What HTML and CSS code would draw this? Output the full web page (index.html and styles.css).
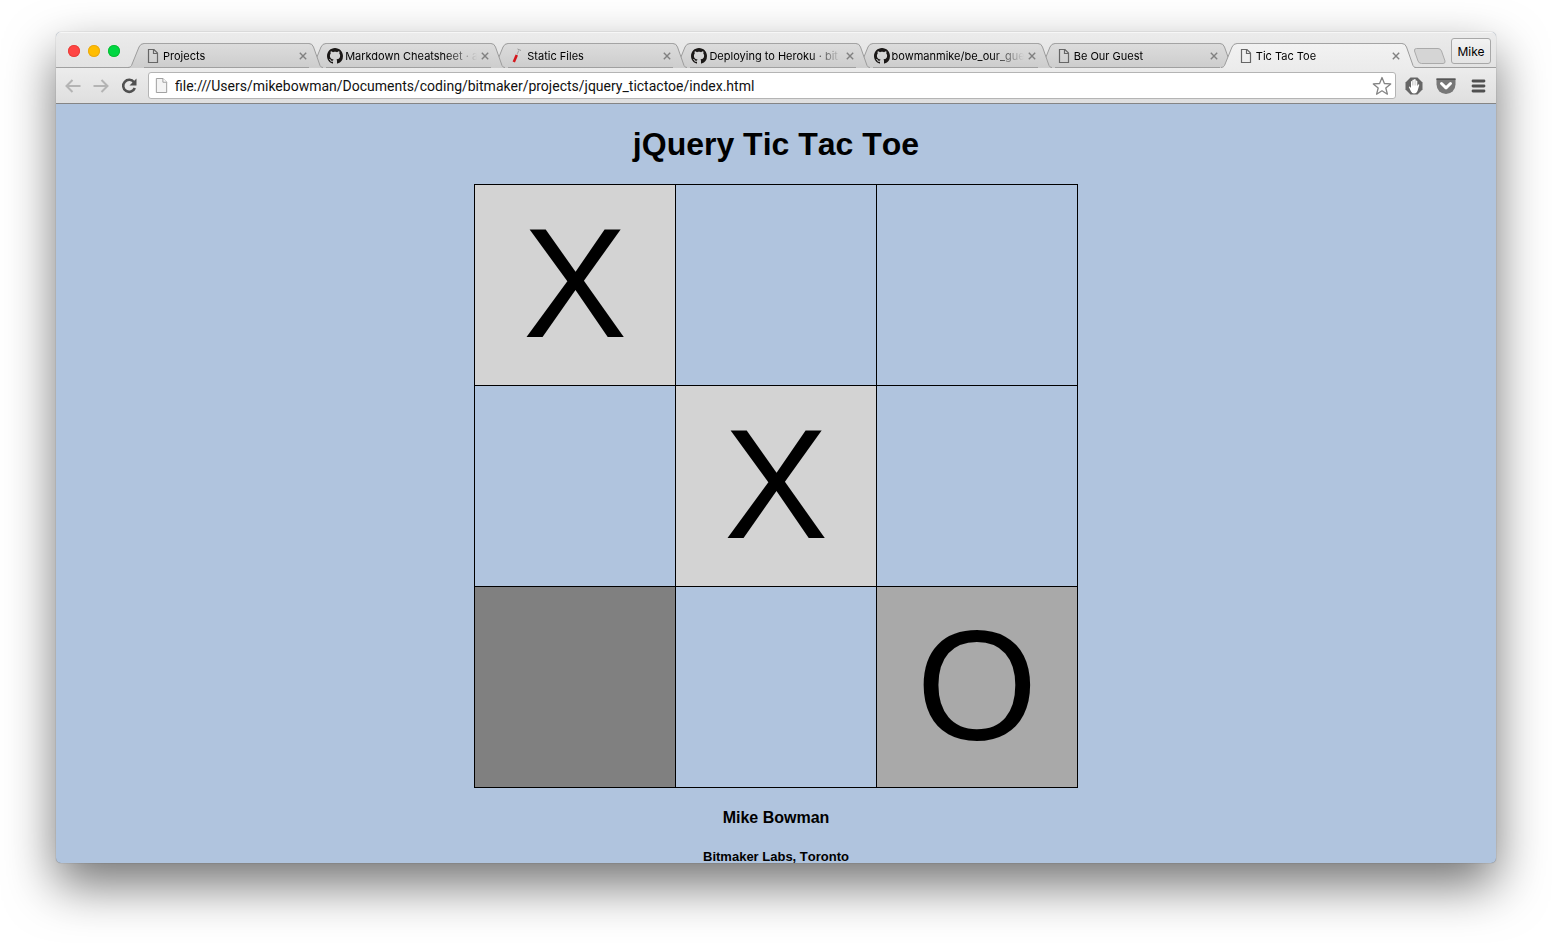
FILE: index.html
```html
<!DOCTYPE html>
<html lang="en">
<head>
<meta charset="utf-8">
<title>Tic Tac Toe</title>
<link rel="stylesheet" href="styles.css">
</head>
<body>
<svg class="defs" aria-hidden="true">
  <defs>
    <linearGradient id="tab-fill" x1="0" y1="0" x2="0" y2="1"><stop offset="0" stop-color="#dcdcdc"/><stop offset="1" stop-color="#cdcdcd"/></linearGradient>
    <linearGradient id="tab-on" x1="0" y1="0" x2="0" y2="1"><stop offset="0" stop-color="#f2f2f2"/><stop offset="1" stop-color="#ececec"/></linearGradient>
    <symbol id="edge-l" viewBox="0 0 16 25"><path d="M0 25C2 24.500 3 23.500 3.500 22.500L11 4Q12.500 .5 16 .5V25Z"/><path class="line" d="M0 24.500C2 24.300 3 23.500 3.500 22.500L11 4Q12.500 .5 16 .5"/></symbol>
    <symbol id="edge-r" viewBox="0 0 14 25"><path d="M14 25C12 24.500 11.500 23.500 11 22.500L4.500 4Q3.300 .5 0 .5V25Z"/><path class="line" d="M14 24.500C12 24.300 11.500 23.500 11 22.500L4.500 4Q3.300 .5 0 .5"/></symbol>
    <symbol id="page" viewBox="0 0 16 16"><path d="M3.500 1.500H9L12.500 5V14.500H3.500ZM8.500 1.500V5.500H12.500" fill="none" stroke="#666" stroke-width="1.200"/></symbol>
    <symbol id="github" viewBox="0 0 16 16"><path fill="#1b1817" d="M8 0C3.580 0 0 3.580 0 8c0 3.540 2.290 6.530 5.470 7.590.4.070.55-.17.55-.38 0-.19-.01-.82-.01-1.490-2.010.37-2.530-.49-2.690-.94-.09-.23-.48-.94-.82-1.130-.28-.15-.68-.52-.01-.53.63-.01 1.080.58 1.230.82.72 1.210 1.870.87 2.330.66.070-.52.28-.87.51-1.070-1.780-.2-3.640-.89-3.640-3.950 0-.87.31-1.590.82-2.150-.08-.2-.36-1.020.08-2.120 0 0 .67-.21 2.200.82.64-.18 1.320-.27 2-.27s1.360.09 2 .27c1.530-1.040 2.200-.82 2.200-.82.44 1.100.16 1.920.08 2.120.51.56.82 1.270.82 2.150 0 3.070-1.870 3.750-3.650 3.950.29.25.54.73.54 1.480 0 1.070-.01 1.930-.01 2.200 0 .21.15.46.55.38A8.010 8.010 0 0 0 16 8c0-4.420-3.580-8-8-8z"/></symbol>
    <symbol id="tube" viewBox="0 0 16 16"><path d="M5 14L10.500 1.500" stroke="#ddd" stroke-width="2.600"/><path d="M4.800 14L7.800 7" stroke="#d4161c" stroke-width="2.600"/><path d="M8 6.500L9.800 2.500" stroke="#aaa" stroke-width="1.200"/><path d="M8.500 1L12 2.500" stroke="#999"/></symbol>
    <symbol id="cross" viewBox="0 0 12 12"><path d="M2.800 2.800L9.200 9.200M9.200 2.800L2.800 9.200" stroke="#808080" stroke-width="1.400"/></symbol>
  </defs>
</svg>
<div class="window">
  <header class="titlebar">
    <div class="lights">
      <button class="light close" aria-label="Close window"></button>
      <button class="light minimise" aria-label="Minimise window"></button>
      <button class="light expand" aria-label="Zoom window"></button>
    </div>
    <nav class="tabs">
      <div class="tab"><svg class="edge left"><use href="#edge-l"/></svg><div class="tab-body"><svg class="favicon"><use href="#page"/></svg><span class="tab-title">Projects</span><button class="tab-close" aria-label="Close tab"><svg><use href="#cross"/></svg></button></div><svg class="edge"><use href="#edge-r"/></svg></div>
      <div class="tab"><svg class="edge left"><use href="#edge-l"/></svg><div class="tab-body"><svg class="favicon"><use href="#github"/></svg><span class="tab-title">Markdown Cheatsheet · a</span><button class="tab-close" aria-label="Close tab"><svg><use href="#cross"/></svg></button></div><svg class="edge"><use href="#edge-r"/></svg></div>
      <div class="tab"><svg class="edge left"><use href="#edge-l"/></svg><div class="tab-body"><svg class="favicon"><use href="#tube"/></svg><span class="tab-title">Static Files</span><button class="tab-close" aria-label="Close tab"><svg><use href="#cross"/></svg></button></div><svg class="edge"><use href="#edge-r"/></svg></div>
      <div class="tab"><svg class="edge left"><use href="#edge-l"/></svg><div class="tab-body"><svg class="favicon"><use href="#github"/></svg><span class="tab-title">Deploying to Heroku · bit</span><button class="tab-close" aria-label="Close tab"><svg><use href="#cross"/></svg></button></div><svg class="edge"><use href="#edge-r"/></svg></div>
      <div class="tab"><svg class="edge left"><use href="#edge-l"/></svg><div class="tab-body"><svg class="favicon"><use href="#github"/></svg><span class="tab-title">bowmanmike/be_our_gue</span><button class="tab-close" aria-label="Close tab"><svg><use href="#cross"/></svg></button></div><svg class="edge"><use href="#edge-r"/></svg></div>
      <div class="tab"><svg class="edge left"><use href="#edge-l"/></svg><div class="tab-body"><svg class="favicon"><use href="#page"/></svg><span class="tab-title">Be Our Guest</span><button class="tab-close" aria-label="Close tab"><svg><use href="#cross"/></svg></button></div><svg class="edge"><use href="#edge-r"/></svg></div>
      <div class="tab active"><svg class="edge left"><use href="#edge-l"/></svg><div class="tab-body"><svg class="favicon"><use href="#page"/></svg><span class="tab-title">Tic Tac Toe</span><button class="tab-close" aria-label="Close tab"><svg><use href="#cross"/></svg></button></div><svg class="edge"><use href="#edge-r"/></svg></div>
    </nav>
    <button class="new-tab" aria-label="New tab"><svg viewBox="0 0 34 18"><path d="M3.500 1.500H25Q27.500 1.500 28.500 4L32 14Q32.500 16.500 30 16.500H8.500Q6 16.500 5 14L1.500 4Q1 1.500 3.500 1.500Z" fill="#d5d5d5" stroke="#aaa"/></svg></button>
    <button class="profile">Mike</button>
  </header>
  <div class="toolbar">
    <button class="tool" aria-label="Back"><svg viewBox="0 0 16 16"><path d="M15.500 8H2M7.500 2L1.500 8L7.500 14" fill="none" stroke="#b4b4b4" stroke-width="2"/></svg></button>
    <button class="tool" aria-label="Forward"><svg viewBox="0 0 16 16"><path d="M.5 8H14M8.500 2L14.500 8L8.500 14" fill="none" stroke="#b4b4b4" stroke-width="2"/></svg></button>
    <button class="tool" aria-label="Reload"><svg viewBox="0 0 16 16"><path d="M13 4.200A6 6 0 1 0 13.800 10" fill="none" stroke="#505050" stroke-width="2.600"/><path d="M15.500 .5V7.500H8.500Z" fill="#505050"/></svg></button>
    <div class="address">
      <svg class="address-icon" viewBox="0 0 16 16"><path d="M2.500 .5H9.500L13.500 4.500V15.500H2.500Z" fill="#f4f4f4" stroke="#999"/><path d="M9.500 .5V4.500H13.500" fill="#fff" stroke="#999"/></svg>
      <input class="url" type="text" aria-label="Address" value="file:///Users/mikebowman/Documents/coding/bitmaker/projects/jquery_tictactoe/index.html">
      <button class="star" aria-label="Bookmark"><svg viewBox="0 0 20 20"><path d="M10 1.500L12.400 7.500L18.700 7.900L13.800 12L15.400 18.200L10 14.800L4.600 18.200L6.200 12L1.300 7.900L7.600 7.500Z" fill="#fff" stroke="#848484" stroke-width="1.300" stroke-linejoin="round"/></svg></button>
    </div>
    <button class="extension" aria-label="Ad blocker"><svg viewBox="0 0 20 20"><path d="M6.500 1.500H13.500L18.500 6.500V13.500L13.500 18.500H6.500L1.500 13.500V6.500Z" fill="#666"/><path d="M7 15.500L4.800 11Q5.200 10 6.200 11L7 12V5.500Q7.600 4.500 8.400 5.500V4Q9.200 3 10 4V3.500Q10.900 2.500 11.700 3.500V5Q12.500 4 13.300 5V10L14.300 8.500Q15.500 8 15.200 9.300L13.500 15Q12.500 17.500 10 17.500Q8 17.500 7 15.500Z" fill="#fff"/><path d="M8.500 5.500V9.500M10 4.500V9.500M11.700 5V9.500" stroke="#aaa" stroke-width=".5"/></svg></button>
    <button class="extension" aria-label="Pocket"><svg viewBox="0 0 20 20"><path d="M.5 2.500H19.500V8.500A9.500 9.500 0 0 1 .5 8.500Z" fill="#777"/><path d="M.5 3.200H19.500" stroke="#555" stroke-width="1.400"/><path d="M5.500 7.500L10 11.800L14.500 7.500" fill="none" stroke="#fff" stroke-width="3" stroke-linecap="round" stroke-linejoin="round"/></svg></button>
    <button class="extension" aria-label="Menu"><svg viewBox="0 0 20 20"><path d="M5 5H16M5 10H16M5 15H16" stroke="#505050" stroke-width="2.800" stroke-linecap="round"/></svg></button>
  </div>
  <main class="content">
    <h1 class="heading">jQuery Tic Tac Toe</h1>
    <div class="board">
      <button class="cell player-x">X</button>
      <button class="cell" aria-label="Empty"></button>
      <button class="cell" aria-label="Empty"></button>
      <button class="cell" aria-label="Empty"></button>
      <button class="cell player-x">X</button>
      <button class="cell" aria-label="Empty"></button>
      <button class="cell hovered" aria-label="Empty"></button>
      <button class="cell" aria-label="Empty"></button>
      <button class="cell player-o">O</button>
    </div>
    <h4 class="author">Mike Bowman</h4>
    <h5 class="school">Bitmaker Labs, Toronto</h5>
  </main>
</div>
</body>
</html>
```
FILE: styles.css
```css
* {
  box-sizing: border-box;
}

body {
  display: flex;
  height: 100vh;
  margin: 0;
  padding: 32px 56px 80px;
  overflow: hidden;
  background: #fff;
  color: #000;
  font-family: "Liberation Sans", Arial, sans-serif;
}

button {
  margin: 0;
  padding: 0;
  border: 0;
  background: none;
  color: inherit;
  font-family: inherit;
}

svg {
  display: block;
}

.defs {
  position: absolute;
  width: 0;
  height: 0;
}

.window {
  display: flex;
  flex: 1;
  flex-direction: column;
  min-width: 0;
  overflow: hidden;
  border-radius: 5px;
  background: #b0c4de;
  box-shadow: 0 0 1px rgba(0, 0, 0, 0.5), 0 22px 50px rgba(0, 0, 0, 0.55);
}

.titlebar {
  display: flex;
  flex: none;
  align-items: flex-end;
  height: 36px;
  border-top: 1px solid #f6f6f6;
  background: linear-gradient(#ebebeb, #e2e2e2);
  box-shadow: inset 0 -1px #a0a0a0;
  font-family: Inter, Roboto, sans-serif;
}

.lights {
  display: flex;
  gap: 8px;
  width: 72px;
  padding: 0 0 11px 12px;
}

.light {
  flex: none;
  width: 12px;
  height: 12px;
  border-radius: 50%;
}

.close {
  background: #ff4544;
  box-shadow: inset 0 0 0 1px #e8403c;
}

.minimise {
  background: #ffbd00;
  box-shadow: inset 0 0 0 1px #e9a914;
}

.expand {
  background: #00d742;
  box-shadow: inset 0 0 0 1px #0bbd35;
}

.tabs {
  display: flex;
  flex: 1;
  min-width: 0;
}

.tab {
  z-index: 1;
  display: flex;
  flex: 1;
  min-width: 0;
  height: 25px;
}

.tab + .tab {
  margin-left: -13px;
}

/* Each tab overlaps the one to its right */
.tab:nth-child(1) { z-index: 6; }
.tab:nth-child(2) { z-index: 5; }
.tab:nth-child(3) { z-index: 4; }
.tab:nth-child(4) { z-index: 3; }
.tab:nth-child(5) { z-index: 2; }

.tab.active {
  z-index: 7;
}

.edge {
  flex: none;
  width: 14px;
  height: 25px;
  fill: url(#tab-fill);
}

.edge.left {
  width: 16px;
}

.line {
  fill: none;
  stroke: #9c9c9c;
}

.tab-body {
  display: flex;
  flex: 1;
  align-items: center;
  gap: 2px;
  min-width: 0;
  padding-left: 1px;
  border-top: 1px solid #a4a4a4;
  border-bottom: 1px solid #a0a0a0;
  background: linear-gradient(#dcdcdc, #cdcdcd);
}

.active .edge {
  fill: url(#tab-on);
}

.active .tab-body {
  border-bottom-color: #ececec;
  background: linear-gradient(#f2f2f2, #ececec);
}

.favicon {
  flex: none;
  width: 16px;
  height: 16px;
}

.tab-title {
  flex: 1;
  min-width: 0;
  overflow: hidden;
  font-size: 11px;
  line-height: 16px;
  white-space: nowrap;
  -webkit-mask-image: linear-gradient(to left, transparent, #000 32px);
  mask-image: linear-gradient(to left, transparent, #000 32px);
}

.tab-close,
.tab-close svg {
  flex: none;
  width: 12px;
  height: 12px;
}

.new-tab {
  flex: none;
  width: 34px;
  height: 18px;
  margin: 0 4px 3px -3px;
}

.profile {
  flex: none;
  width: 40px;
  height: 26px;
  margin: 0 5px 4px 0;
  border: 1px solid #a8a8a8;
  border-radius: 3px;
  background: linear-gradient(#f2f2f2, #e4e4e4);
  font-size: 12px;
}

.toolbar {
  display: flex;
  flex: none;
  align-items: center;
  gap: 12px;
  height: 36px;
  padding: 0 8px 0 9px;
  border-bottom: 1px solid #858585;
  background: linear-gradient(#ececec, #dfdfdf);
}

.tool,
.tool svg {
  flex: none;
  width: 16px;
  height: 16px;
}

.address {
  display: flex;
  flex: 1;
  align-items: center;
  gap: 6px;
  min-width: 0;
  height: 27px;
  margin-left: -1px;
  padding: 0 3px 0 5px;
  border: 1px solid #b4b4b4;
  border-radius: 3px;
  background: #fff;
}

.address-icon {
  flex: none;
  width: 15px;
  height: 15px;
}

.url {
  flex: 1;
  min-width: 0;
  padding: 0;
  border: 0;
  outline: 0;
  background: transparent;
  color: #111;
  font-family: Roboto, sans-serif;
  font-size: 14px;
  line-height: 20px;
}

.star,
.star svg,
.extension,
.extension svg {
  flex: none;
  width: 20px;
  height: 20px;
}

.address + .extension {
  margin-left: -4px;
}

.content {
  display: flex;
  flex: 1;
  flex-direction: column;
  align-items: center;
  min-height: 0;
  padding-top: 22px;
  overflow: hidden;
  font-kerning: none;
}

.heading {
  margin: 0 0 21px;
  font-size: 32px;
  line-height: 37px;
}

.board {
  display: grid;
  flex: none;
  grid-template-columns: repeat(3, 200px);
  grid-auto-rows: 200px;
  gap: 1px;
  border: 1px solid #000;
  background: #000;
}

.cell {
  padding-bottom: 4px;
  background: #b0c4de;
  font-size: 156px;
  line-height: 180px;
}

.player-x {
  background: #d3d3d3;
}

.player-o {
  background: #a9a9a9;
}

.hovered {
  background: #808080;
}

.author {
  margin: 21px 0 22px;
  font-size: 16px;
  line-height: 18px;
}

.school {
  margin: 0;
  font-size: 13px;
  line-height: 15px;
}
```
